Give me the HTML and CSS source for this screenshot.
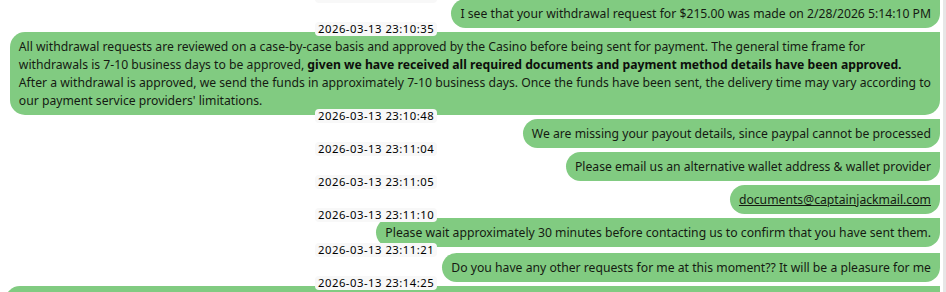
FILE: index.html
```html
<!DOCTYPE html>
<html lang="en">
<head>
<meta charset="utf-8">
<title>Chat</title>
<link rel="stylesheet" href="styles.css">
</head>
<body>
<div class="page">
  <div class="chat">
    <div class="msg">
      <span class="ts">2026-03-13 23:10:32</span>
      <div class="bubble">I see that your withdrawal request for $215.00 was made on 2/28/2026 5:14:10 PM</div>
    </div>
    <div class="msg">
      <span class="ts">2026-03-13 23:10:35</span>
      <div class="bubble">All withdrawal requests are reviewed on a case-by-case basis and approved by the Casino before being sent for payment. The general time frame for<br>withdrawals is 7-10 business days to be approved, <b>given we have received all required documents and payment method details have been approved.</b><br>After a withdrawal is approved, we send the funds in approximately 7-10 business days. Once the funds have been sent, the delivery time may vary according to<br>our payment service providers' limitations.</div>
    </div>
    <div class="msg">
      <span class="ts">2026-03-13 23:10:48</span>
      <div class="bubble">We are missing your payout details, since paypal cannot be processed</div>
    </div>
    <div class="msg">
      <span class="ts">2026-03-13 23:11:04</span>
      <div class="bubble">Please email us an alternative wallet address &amp; wallet provider</div>
    </div>
    <div class="msg">
      <span class="ts">2026-03-13 23:11:05</span>
      <div class="bubble"><a class="link" href="#">documents@captainjackmail.com</a></div>
    </div>
    <div class="msg">
      <span class="ts">2026-03-13 23:11:10</span>
      <div class="bubble">Please wait approximately 30 minutes before contacting us to confirm that you have sent them.</div>
    </div>
    <div class="msg msg-wide-gap">
      <span class="ts">2026-03-13 23:11:21</span>
      <div class="bubble">Do you have any other requests for me at this moment?? It will be a pleasure for me</div>
    </div>
    <div class="msg">
      <span class="ts">2026-03-13 23:14:25</span>
      <div class="bubble">Thank you for contacting us. If you have any further questions regarding your withdrawal, please do not hesitate to reach out to our support team at any time, we are available around the clock to assist you with anything you may need.</div>
    </div>
  </div>
  <div class="track"></div>
</div>
</body>
</html>
```

FILE: styles.css
```css
html, body {
  margin: 0;
  padding: 0;
  background: #ffffff;
  overflow: hidden;
}

.page {
  display: flex;
  width: 946px;
  height: 292px;
  overflow: hidden;
}

.chat {
  flex: 1;
  display: flex;
  flex-direction: column;
  padding: 0 3px 0 5px;
  margin-top: -5px;
  font-family: "Noto Sans", "Open Sans", sans-serif;
  font-size: 12.2px;
  color: #151a12;
}

.track {
  width: 3px;
  background: #e6e6e6;
  flex: none;
}

.msg {
  position: relative;
  display: flex;
  justify-content: flex-end;
  margin-top: 4px;
}

.msg-wide-gap {
  margin-top: 6px;
}

.bubble {
  background: #81cb81;
  border-radius: 15px 0 15px 15px;
  padding: 6px 9px 5px 9px;
  line-height: 18px;
  max-width: 100%;
  box-sizing: border-box;
}

.bubble b {
  font-weight: 700;
  color: #0d0f0b;
}

.link {
  color: #151a12;
  text-decoration: underline;
}

.ts {
  position: absolute;
  top: -10px;
  left: 310px;
  z-index: 1;
  background: #f8f8f8;
  border-radius: 4px;
  padding: 0 3px;
  font-size: 11.3px;
  letter-spacing: 0.5px;
  line-height: 14px;
  color: #000000;
  white-space: nowrap;
}
```
